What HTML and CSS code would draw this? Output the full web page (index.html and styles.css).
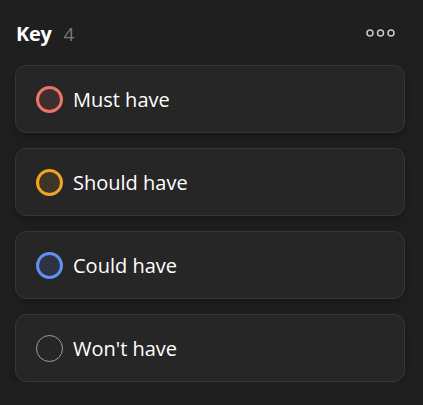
FILE: index.html
```html
<!DOCTYPE html>
<html>
<head>
<meta charset="utf-8">
<link rel="stylesheet" href="styles.css">
</head>
<body>
<div class="panel">
  <div class="header">
    <div class="title"><span class="name">Key</span><span class="count">4</span></div>
    <button class="more" aria-label="More">
      <svg width="30" height="8" viewBox="0 0 30 8"><circle cx="4" cy="4" r="3" /><circle cx="14.5" cy="4" r="3" /><circle cx="25" cy="4" r="3" /></svg>
    </button>
  </div>
  <div class="list">
    <div class="card"><span class="dot must"></span><span class="label">Must have</span></div>
    <div class="card"><span class="dot should"></span><span class="label">Should have</span></div>
    <div class="card"><span class="dot could"></span><span class="label">Could have</span></div>
    <div class="card"><span class="dot wont"></span><span class="label">Won't have</span></div>
  </div>
</div>
</body>
</html>
```
FILE: styles.css
```css
html, body {
  margin: 0;
  padding: 0;
  background: #1f1f1f;
  font-family: "Open Sans", "Noto Sans", sans-serif;
  color: #ffffff;
}
.panel {
  padding: 19px 18px 0 15px;
}
.header {
  display: flex;
  align-items: center;
  justify-content: space-between;
  height: 28px;
  padding-left: 1px;
  margin-bottom: 18px;
}
.title {
  display: flex;
  align-items: baseline;
  gap: 12px;
}
.name {
  font-size: 20px;
  font-weight: 700;
  letter-spacing: -0.3px;
  color: #ffffff;
}
.count {
  font-size: 19px;
  color: #7a7a7a;
}
.more {
  background: none;
  border: 0;
  padding: 0;
  margin-right: 9px;
  display: flex;
}
.more svg circle {
  fill: none;
  stroke: #c8c8c8;
  stroke-width: 1.5;
}
.list {
  display: flex;
  flex-direction: column;
  gap: 15px;
}
.card {
  height: 66px;
  box-sizing: content-box;
  border: 1px solid #363636;
  border-radius: 11px;
  background: #262626;
  display: flex;
  align-items: center;
  padding-left: 20px;
  gap: 10px;
  box-shadow: 0 4px 8px rgba(0, 0, 0, 0.25);
}
.dot {
  box-sizing: border-box;
  width: 27px;
  height: 27px;
  border-radius: 50%;
  border: 3px solid;
  flex: none;
}
.must { border-color: #ee7468; background: #3d2f2d; }
.should { border-color: #f2a322; background: #3d3526; }
.could { border-color: #5f91f5; background: #2e3242; }
.wont { border: 1.5px solid #a0a0a0; background: transparent; }
.label {
  font-size: 20px;
  color: #ffffff;
}
```
